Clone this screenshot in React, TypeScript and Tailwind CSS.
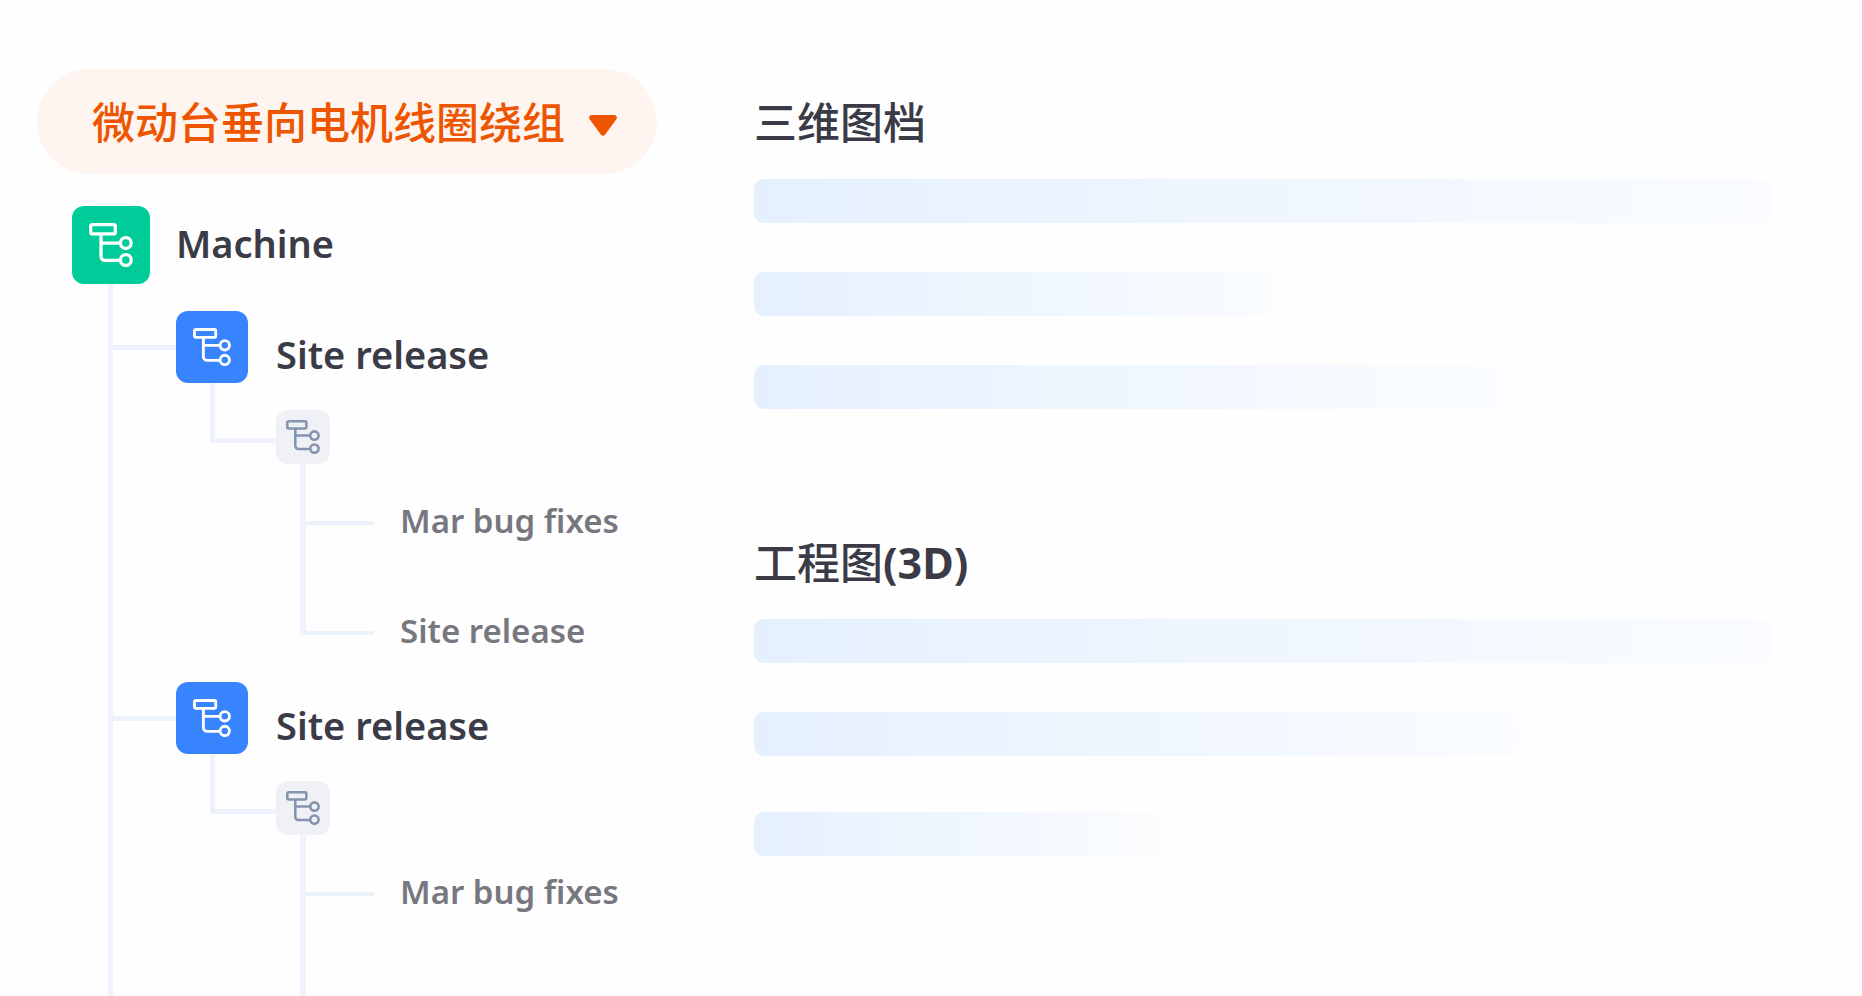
import clsx from 'clsx';

type TileTone = 'green' | 'blue' | 'gray';

const tileStyles: Record<TileTone, string> = {
  green: 'size-[78px] bg-[#00cc99] text-white',
  blue: 'size-[72px] bg-[#3884ff] text-white',
  gray: 'size-[54px] bg-[#f0f1f6] text-[#8494ad]',
};

const glyphStyles: Record<TileTone, string> = {
  green: 'size-11',
  blue: 'size-[38px]',
  gray: 'size-[34px]',
};

const branches = [
  { name: 'Site release', leaves: ['Mar bug fixes', 'Site release'], open: false },
  { name: 'Site release', leaves: ['Mar bug fixes'], open: true },
];

const sections = [
  {
    title: '三维图档',
    suffix: '',
    bars: ['w-full to-[#fafcff]', 'mt-[49px] w-[51%] to-[#f9fcff]', 'mt-[49px] w-[81%] to-[#fdfeff]'],
  },
  {
    title: '工程图',
    suffix: '(3D)',
    bars: ['w-full to-[#fafcff]', 'mt-[49px] w-[75%] to-[#fafcff]', 'mt-14 w-[45%] to-[#fefefe]'],
  },
];

function TreeTile({ tone }: { tone: TileTone }) {
  return (
    <span className={clsx('flex shrink-0 items-center justify-center rounded-xl', tileStyles[tone])}>
      <svg viewBox="0 0 44 44" fill="none" stroke="currentColor" strokeWidth="3.3" className={glyphStyles[tone]} aria-hidden="true">
        <rect x="1.7" y="1.7" width="24.6" height="9.2" rx="1.5" />
        <path d="M12 11v22.4a4 4 0 0 0 4 4H31M12 20.1H31" />
        <circle cx="36.8" cy="20.1" r="5.4" />
        <circle cx="36.8" cy="37" r="5.4" />
      </svg>
    </span>
  );
}

function Leaf({ name, first, last }: { name: string; first: boolean; last: boolean }) {
  return (
    <li className={clsx('flex items-end', first ? 'h-[81px]' : 'h-[110px]')}>
      <span className={clsx('w-[6px] self-stretch bg-[#edf2fc]', last && 'mb-5')} />
      <div className="flex h-11 items-center">
        <span className="h-1 w-[68px] bg-[#ebf2fb]" />
        <span className="ml-[26px] pb-1 text-[33px] leading-[44px] whitespace-nowrap text-[#777780]">{name}</span>
      </div>
    </li>
  );
}

function Branch({ name, leaves, open }: { name: string; leaves: string[]; open: boolean }) {
  return (
    <li className={clsx('flex flex-col pt-[27px]', open && 'flex-1')}>
      <div className="flex items-end">
        <span className="h-[5px] w-[63px] self-center bg-[#edf2fc]" />
        <TreeTile tone="blue" />
        <span className="ml-7 text-[38px] leading-[58px] whitespace-nowrap">{name}</span>
      </div>

      <div className="ml-[97px] flex items-start">
        <span className="h-[60px] w-[66px] border-b-[5px] border-l-[5px] border-[#edf2fc]" />
        <div className="pt-[27px]">
          <TreeTile tone="gray" />
        </div>
      </div>

      <ul className="ml-[187px]">
        {leaves.map((leaf, i) => (
          <Leaf key={leaf} name={leaf} first={i === 0} last={!open && i === leaves.length - 1} />
        ))}
      </ul>
      {/* Trunk carries on below while more leaves follow */}
      {open && <span className="ml-[187px] w-[6px] flex-1 bg-[#edf2fc]" />}
    </li>
  );
}

export default function App() {
  return (
    <main className="grid min-h-screen grid-cols-[754px_1fr] overflow-hidden bg-[#fefefe] font-['Noto_Sans','Noto_Sans_CJK_SC',sans-serif] font-semibold text-[#3b3a47]">
      {/* Structure tree */}
      <nav className="flex flex-col pt-[69px]">
        <button
          type="button"
          className="ml-[37px] flex h-[105px] items-center gap-6 self-start rounded-full bg-[#fff5f0] pt-1 pr-10 pl-[55px] text-[43px] font-medium whitespace-nowrap text-[#ee5500]"
        >
          微动台垂向电机线圈绕组
          <svg viewBox="0 0 28 21" className="mt-1 h-[21px] w-7" fill="currentColor" aria-hidden="true">
            <path d="M3 0h22c2.600 0 3.800 2.600 2.200 4.600L16 19.800c-1 1.400-3 1.400-4 0L.8 4.600C-.8 2.600.4 0 3 0z" />
          </svg>
        </button>

        <div className="mt-8 ml-[72px] flex items-center">
          <TreeTile tone="green" />
          <span className="ml-[26px] pb-1 text-[38px] leading-[54px]">Machine</span>
        </div>

        <ul className="ml-[108px] flex flex-1 flex-col border-l-[5px] border-[#edf2fc]">
          {branches.map((branch, i) => (
            <Branch key={i} {...branch} />
          ))}
        </ul>
      </nav>

      {/* Document placeholders */}
      <div className="flex flex-col gap-[122px] pt-[91px] pr-[90px]">
        {sections.map((section) => (
          <section key={section.title}>
            <h2 className="mb-6 text-[43px] leading-[64px] font-medium">
              {section.title}
              {section.suffix && <span className="font-bold">{section.suffix}</span>}
            </h2>
            {section.bars.map((bar) => (
              <div key={bar} className={clsx('h-11 rounded-[10px] bg-linear-to-r from-[#e5f0ff]', bar)} />
            ))}
          </section>
        ))}
      </div>
    </main>
  );
}
